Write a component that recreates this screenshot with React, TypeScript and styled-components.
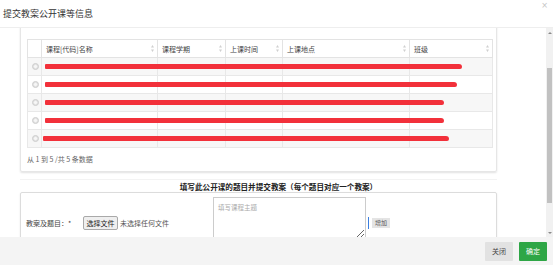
import { useLayoutEffect, useRef } from "react";
import styled, { createGlobalStyle } from "styled-components";

const GlobalStyle = createGlobalStyle`
  html, body {
    margin: 0;
    padding: 0;
    background: #fff;
    font-family: "Noto Sans CJK SC", "Noto Sans", sans-serif;
    color: #333;
  }
`;

const Modal = styled.div`
  width: 553px;
  height: 265px;
  display: flex;
  flex-direction: column;
  background: #fff;
  overflow: hidden;
`;

const Head = styled.div`
  height: 27px;
  flex: none;
  display: flex;
  justify-content: space-between;
  align-items: flex-start;
  border-bottom: 1px solid #eee;
`;

const Title = styled.div`
  padding: 8px 0 0 3px;
  font-size: 9px;
  line-height: 12px;
  color: #333;
`;

const Close = styled.button`
  padding: 0 5px 0 0;
  margin-top: 1px;
  border: none;
  background: none;
  font-family: "DejaVu Sans", sans-serif;
  font-size: 8px;
  line-height: 10px;
  color: #c4c4c4;
`;

const Body = styled.div`
  flex: 1;
  min-height: 0;
  display: flex;
`;

const Scroller = styled.div`
  flex: 1;
  overflow-y: scroll;
  scrollbar-width: none;
`;

const ScrollTrack = styled.div`
  width: 7px;
  flex: none;
  display: flex;
  flex-direction: column;
  align-items: center;
  background: #f1f1f1;
`;

const ScrollArrow = styled.span<{ $down?: boolean }>`
  height: 9px;
  flex: none;
  display: flex;
  align-items: center;
  justify-content: center;

  &::before {
    content: "";
    border-left: 2px solid transparent;
    border-right: 2px solid transparent;
    ${(p) =>
      p.$down ? "border-top: 2px solid #8a8a8a;" : "border-bottom: 2px solid #8a8a8a;"}
  }
`;

const ScrollThumb = styled.span`
  width: 5px;
  height: 135px;
  margin-top: 31px;
  background: #c1c1c1;
`;

const Content = styled.div`
  padding: 10px 49px 20px 20px;
`;

const Panel = styled.div`
  padding: 47px 6px 7px;
  border: 1px solid #e6e6e6;
  border-radius: 2px;
  box-shadow: 0 1px 2px rgba(0, 0, 0, 0.12);
`;

const Table = styled.table`
  width: 465px;
  border-collapse: collapse;
  table-layout: fixed;
  font-size: 7px;
`;

const Th = styled.th`
  height: 17px;
  padding: 0 3px 0 4px;
  border: 1px solid #e3e3e3;
  font-weight: normal;
  text-align: left;
  color: #444;
`;

const ThInner = styled.div`
  display: flex;
  justify-content: space-between;
  align-items: center;
`;

const Row = styled.tr<{ $striped: boolean }>`
  background: ${(p) => (p.$striped ? "#f7f7f7" : "#fff")};
`;

const Td = styled.td`
  position: relative;
  height: 17px;
  padding: 0 4px;
  border: 1px solid #e8e8e8;
`;

const Radio = styled.span`
  display: block;
  width: 5px;
  height: 5px;
  margin: 0 auto;
  border: 1px solid #cfcfcf;
  border-radius: 50%;
  background: radial-gradient(circle, #f6f6f6 0 30%, #dcdcdc 70%);
`;

const Redaction = styled.span`
  position: absolute;
  top: 6px;
  height: 5px;
  background: #f2303a;
  border-radius: 1px 3px 2px 1px;
  z-index: 1;
`;

const Info = styled.div`
  margin-top: 6px;
  font-size: 7px;
  line-height: 10px;
  color: #666;
`;

const HeadingBar = styled.div`
  margin-top: 7px;
  padding: 2px 0 0 40px;
  border-top: 1px solid #f3f3f3;
  text-align: center;
  font-size: 7.6px;
  font-weight: bold;
  line-height: 10px;
  color: #222;
`;

const FormBox = styled.div`
  padding: 4px 5px 14px;
  border: 1px solid #dcdcdc;
  border-radius: 2px;
  box-shadow: 0 1px 2px rgba(0, 0, 0, 0.1);
`;

const FormRow = styled.div`
  display: grid;
  grid-template-columns: 57px 130px 153px auto;
  align-items: center;
`;

const Label = styled.div`
  margin-top: 9px;
  font-size: 7px;
  color: #444;
`;

const FileGroup = styled.div`
  margin-top: 9px;
  display: flex;
  align-items: center;
  gap: 2px;
  font-size: 7px;
  color: #555;
`;

const FileButton = styled.button`
  width: 35px;
  height: 14px;
  padding: 0;
  border: 1px solid #a9a9a9;
  border-radius: 2px;
  background: #efefef;
  font-family: inherit;
  font-size: 7px;
  color: #222;
`;

const TextArea = styled.textarea`
  box-sizing: border-box;
  width: 153px;
  height: 42px;
  padding: 4px;
  border: 1px solid #ccc;
  font-family: inherit;
  font-size: 6.5px;
  color: #333;
  resize: vertical;

  &::placeholder {
    color: #aaa;
  }
`;

const AddGroup = styled.div`
  margin: 9px 0 0 2px;
  display: flex;
  align-items: center;
  gap: 3px;
`;

const Caret = styled.span`
  width: 1px;
  height: 12px;
  background: #3b7fe0;
`;

const SmallButton = styled.button`
  height: 10px;
  padding: 0 3px;
  border: none;
  background: #e4e4e4;
  font-family: inherit;
  font-size: 6px;
  line-height: 10px;
  color: #555;
`;

const Footer = styled.div`
  height: 28px;
  flex: none;
  display: flex;
  justify-content: flex-end;
  align-items: center;
  gap: 6px;
  padding-right: 6px;
  background: #f4f4f4;
`;

const FooterButton = styled.button<{ $primary?: boolean }>`
  height: 19px;
  padding: 0 7px;
  border: none;
  border-radius: 1px;
  background: ${(p) => (p.$primary ? "#2ea646" : "#e2e2e2")};
  font-family: inherit;
  font-size: 7px;
  color: ${(p) => (p.$primary ? "#fff" : "#444")};
`;

const SortIcon = () => (
  <svg width="3" height="7" viewBox="0 0 3 7">
    <path d="M1.5 0 L3 2.5 H0 Z M1.5 7 L3 4.5 H0 Z" fill="#d0d0d0" />
  </svg>
);

const columns = [
  { title: "课程[代码]名称", w: 116 },
  { title: "课程学期", w: 68 },
  { title: "上课时间", w: 57 },
  { title: "上课地点", w: 127 },
  { title: "班级", w: 83 },
];

const rows = [
  { left: 3, width: 417 },
  { left: 3, width: 412 },
  { left: 3, width: 399 },
  { left: 3, width: 399 },
  { left: 1, width: 406 },
];

const App = () => {
  const scrollRef = useRef<HTMLDivElement>(null);

  useLayoutEffect(() => {
    if (scrollRef.current) scrollRef.current.scrollTop = 47;
  }, []);

  return (
    <Modal>
      <GlobalStyle />
      <Head>
        <Title>提交教案公开课等信息</Title>
        <Close>×</Close>
      </Head>
      <Body>
        <Scroller ref={scrollRef}>
          <Content>
            <Panel>
              <Table>
                <colgroup>
                  <col style={{ width: 14 }} />
                  {columns.map((c) => (
                    <col key={c.title} style={{ width: c.w }} />
                  ))}
                </colgroup>
                <thead>
                  <tr>
                    <Th />
                    {columns.map((c) => (
                      <Th key={c.title}>
                        <ThInner>
                          <span>{c.title}</span>
                          <SortIcon />
                        </ThInner>
                      </Th>
                    ))}
                  </tr>
                </thead>
                <tbody>
                  {rows.map((r, i) => (
                    <Row key={i} $striped={i % 2 === 0}>
                      <Td>
                        <Radio />
                      </Td>
                      <Td>
                        <Redaction style={{ left: r.left, width: r.width }} />
                      </Td>
                      <Td />
                      <Td />
                      <Td />
                      <Td />
                    </Row>
                  ))}
                </tbody>
              </Table>
              <Info>从 1 到 5 /共 5 条数据</Info>
            </Panel>
            <HeadingBar>填写此公开课的题目并提交教案（每个题目对应一个教案）</HeadingBar>
            <FormBox>
              <FormRow>
                <Label>教案及题目：*</Label>
                <FileGroup>
                  <FileButton>选择文件</FileButton>
                  <span>未选择任何文件</span>
                </FileGroup>
                <TextArea placeholder="填写课程主题" />
                <AddGroup>
                  <Caret />
                  <SmallButton>增加</SmallButton>
                </AddGroup>
              </FormRow>
            </FormBox>
          </Content>
        </Scroller>
        <ScrollTrack>
          <ScrollArrow />
          <ScrollThumb />
          <span style={{ flex: 1 }} />
          <ScrollArrow $down />
        </ScrollTrack>
      </Body>
      <Footer>
        <FooterButton>关闭</FooterButton>
        <FooterButton $primary>确定</FooterButton>
      </Footer>
    </Modal>
  );
};

export default App;
